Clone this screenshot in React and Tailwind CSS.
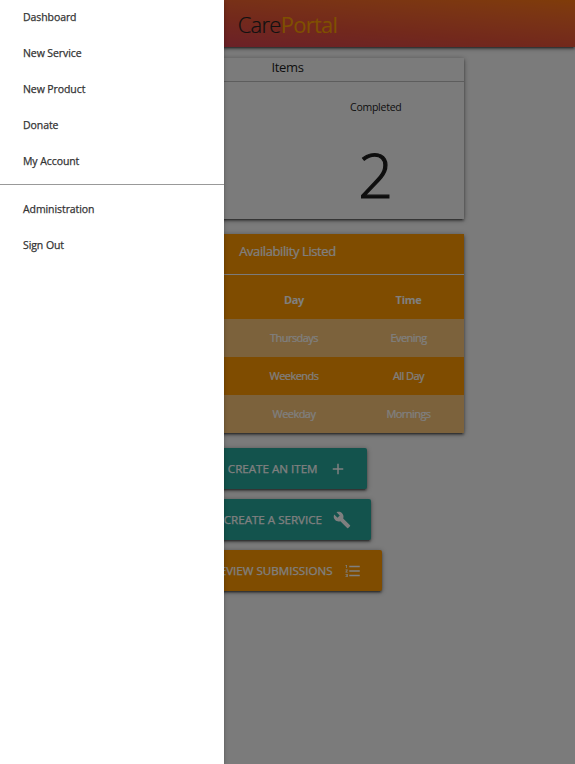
const menu = ["Dashboard", "New Service", "New Product", "Donate", "My Account"];
const account = ["Administration", "Sign Out"];
const rows = [
  ["Lawn Care", "Thursdays", "Evening"],
  ["Cleaning", "Weekends", "All Day"],
  ["Driving", "Weekday", "Mornings"],
];
const shadow = "shadow-[0_2px_2px_0_rgba(0,0,0,0.28),0_3px_1px_-2px_rgba(0,0,0,0.24),0_1px_5px_0_rgba(0,0,0,0.4)]";

function MenuItem({ children }) {
  return (
    <li className="flex h-9 items-center pl-[23px] text-[10.5px] leading-9 tracking-[-0.08px] text-[#333] [-webkit-text-stroke:0.25px_#333]">
      <a>{children}</a>
    </li>
  );
}

function ActionButton({ className, label, children }) {
  return (
    <button className={`flex h-[41px] shrink-0 items-center rounded-[2px] pr-5 text-[11.6px] whitespace-nowrap text-white ${shadow} ${className}`}>
      <span className="flex-1 text-right [-webkit-text-stroke:0.25px_white]">{label}</span>
      {children}
    </button>
  );
}

export default function App() {
  return (
    <div className="relative h-[764px] w-[575px] overflow-hidden bg-[#f6f6f6] font-['Open_Sans','Noto_Sans',sans-serif] text-[#1c1c1c]">
      <header className={`flex h-[47px] items-center justify-center bg-linear-to-tr from-[#cc3558] via-[#e65238] to-[#ff7812] ${shadow}`}>
        <h1 className="text-[22px] leading-none font-light tracking-[-0.75px] text-[#222] [-webkit-text-stroke:0.2px_#222]">
          Care<span className="font-normal text-[#ffa000] [-webkit-text-stroke:0px]">Portal</span>
        </h1>
      </header>

      <main className="flex flex-col items-center">
        <section className={`mt-[11px] h-[161px] w-[353px] bg-[#f6f6f6] ${shadow}`}>
          <h2 className="h-[24px] border-b border-[#bbb] text-center text-[13px] leading-[19px] tracking-[-0.35px]">Items</h2>
          <div className="grid grid-cols-2 text-center">
            <div>
              <p className="mt-[17px] text-[10.5px] leading-4 tracking-[-0.25px]">Pending</p>
              <p className="mt-[24px] text-[61px] leading-[71px] font-light [-webkit-text-stroke:1.2px_#1c1c1c]">0</p>
            </div>
            <div>
              <p className="mt-[17px] text-[10.5px] leading-4 tracking-[-0.25px]">Completed</p>
              <p className="mt-[24px] text-[61px] leading-[71px] font-light [-webkit-text-stroke:1.2px_#1c1c1c]">2</p>
            </div>
          </div>
        </section>

        <section className={`mt-[15px] h-[199px] w-[353px] bg-[#ff9800] text-white ${shadow}`}>
          <h2 className="h-[41px] border-b border-[#f6f6f6] text-center text-[13px] leading-[35px] tracking-[-0.4px] [-webkit-text-stroke:0.2px_white]">
            Availability Listed
          </h2>
          <div className="mt-[6px] grid h-[38px] grid-cols-[124px_117px_112px] items-center text-center text-[11px] font-bold tracking-[-0.3px]">
            <span>Service</span>
            <span className="pl-px">Day</span>
            <span className="pl-px">Time</span>
          </div>
          {rows.map((row, i) => (
            <div
              key={row[0]}
              className={`grid h-[38px] grid-cols-[124px_117px_112px] items-center text-center text-[11px] tracking-[-0.55px] [-webkit-text-stroke:0.2px_white] ${i % 2 === 0 ? "bg-[#f9c579]" : ""}`}
            >
              {row.map((cell) => (
                <span key={cell} className="pl-px">{cell}</span>
              ))}
            </div>
          ))}
        </section>

        <div className="mt-[15px] flex flex-col items-center gap-[10px]">
          <ActionButton className="w-[158px] bg-[#26a69a]" label="CREATE AN ITEM">
            <svg className="ml-[11px] size-[18px]" viewBox="0 0 24 24" fill="currentColor">
              <path d="M19 13h-6v6h-2v-6H5v-2h6V5h2v6h6v2z" />
            </svg>
          </ActionButton>
          <ActionButton className="w-[167px] bg-[#26a69a]" label="CREATE A SERVICE">
            <svg className="ml-[11px] size-[18px]" viewBox="0 0 24 24" fill="currentColor">
              <path d="M22.7 19l-9.1-9.1c.9-2.3.4-5-1.5-6.9-2-2-5-2.4-7.4-1.3L9 6 6 9 1.6 4.7C.4 7.1.9 10.1 2.9 12.1c1.9 1.9 4.6 2.4 6.9 1.5l9.1 9.1c.4.4 1 .4 1.4 0l2.3-2.3c.5-.4.5-1.1.1-1.4z" />
            </svg>
          </ActionButton>
          <ActionButton className="w-[188px] bg-[#ff9800]" label="REVIEW SUBMISSIONS">
            <svg className="ml-[11px] size-[18px]" viewBox="0 0 24 24" fill="currentColor">
              <path d="M2 17h2v.5H3v1h1v.5H2v1h3v-4H2v1zm1-9h1V4H2v1h1v3zm-1 3h1.8L2 13.1v.9h3v-1H3.2L5 10.9V10H2v1zm5-6v2h14V5H7zm0 14h14v-2H7v2zm0-6h14v-2H7v2z" />
            </svg>
          </ActionButton>
        </div>
      </main>

      <div className="absolute inset-0 bg-black/50" />

      <nav className="absolute inset-y-0 left-0 w-[224px] bg-white shadow-[0_2px_2px_0_rgba(0,0,0,0.14),0_3px_1px_-2px_rgba(0,0,0,0.12),0_1px_5px_0_rgba(0,0,0,0.2)]">
        <ul className="-mt-px">
          {menu.map((item) => (
            <MenuItem key={item}>{item}</MenuItem>
          ))}
        </ul>
        <hr className="mt-[5px] mb-[6px] border-t border-[#999]" />
        <ul>
          {account.map((item) => (
            <MenuItem key={item}>{item}</MenuItem>
          ))}
        </ul>
      </nav>
    </div>
  );
}
